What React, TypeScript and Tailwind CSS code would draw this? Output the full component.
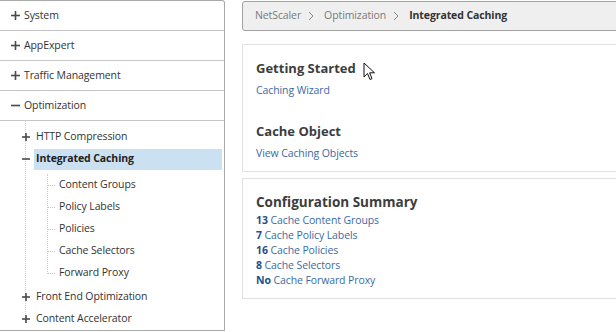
import React from "react";

const font = { fontFamily: '"Open Sans", "Noto Sans", sans-serif' };

function Plus({ minus = false, big = false }: { minus?: boolean; big?: boolean }) {
  const s = big ? 9 : 8;
  return (
    <svg width={s} height={s} viewBox={`0 0 ${s} ${s}`} className="shrink-0">
      <rect x="0" y={(s - 1.6) / 2} width={s} height="1.6" fill="#4a4a4a" />
      {!minus && <rect x={(s - 1.6) / 2} y="0" width="1.6" height={s} fill="#4a4a4a" />}
    </svg>
  );
}

function Chevron() {
  return (
    <svg width="6" height="10" viewBox="0 0 6 10" className="shrink-0 ml-[7px] mr-[10px]">
      <path d="M1 1 L5 5 L1 9" fill="none" stroke="#8a8a8a" strokeWidth="1" />
    </svg>
  );
}

function TopRow({ label, open = false }: { label: string; open?: boolean }) {
  return (
    <div className="h-[30px] border-b border-[#c6c6c6] flex items-center pl-[11px] gap-[4px] text-[10.5px] tracking-[-0.1px] text-[#333]">
      <Plus minus={open} big />
      <span>{label}</span>
    </div>
  );
}

function Child({ label }: { label: string }) {
  return (
    <div className="h-[22px] flex items-center">
      <span className="w-[7px] border-t border-dotted border-[#c4c4c4]" />
      <span className="ml-[4px]">{label}</span>
    </div>
  );
}

function Cursor() {
  return (
    <svg width="14" height="20" viewBox="0 0 14 20" className="absolute left-[363px] top-[62px]">
      <path d="M1 1 L1 15 L4.5 11.5 L7 17.5 L9 16.6 L6.6 10.8 L11.5 10.8 Z" fill="#fff" stroke="#111" strokeWidth="1" strokeLinejoin="round" />
    </svg>
  );
}

export default function App() {
  const summary: [string, string][] = [
    ["13", "Cache Content Groups"],
    ["7", "Cache Policy Labels"],
    ["16", "Cache Policies"],
    ["8", "Cache Selectors"],
    ["No", "Cache Forward Proxy"],
  ];

  return (
    <div className="relative w-[616px] h-[332px] bg-white overflow-hidden flex" style={font}>
      {/* sidebar */}
      <div className="w-[225px] h-[331px] shrink-0 border-t border-r border-b border-[#a9a9a9] rounded-tr-[3px] bg-white">
        <TopRow label="System" />
        <TopRow label="AppExpert" />
        <TopRow label="Traffic Management" />
        <TopRow label="Optimization" open />
        <div className="ml-[25px] mt-[-1px] pt-[6px] border-l border-dotted border-[#cccccc] text-[10.5px] tracking-[-0.1px] text-[#333] h-[198px]">
          <div className="h-[22px] flex items-center -ml-[4px] gap-[6px]">
            <Plus />
            <span>HTTP Compression</span>
          </div>
          <div className="h-[22px] flex items-center -ml-[4px] gap-[4px]">
            <Plus minus />
            <span className="flex-1 h-[21px] flex items-center pl-[2px] mr-[2px] bg-[#cbe0f1] font-bold text-[#222]">
              Integrated Caching
            </span>
          </div>
          <div className="ml-[21px] mt-[4px] border-l border-dotted border-[#cccccc] h-[100px]">
            <Child label="Content Groups" />
            <Child label="Policy Labels" />
            <Child label="Policies" />
            <Child label="Cache Selectors" />
            <Child label="Forward Proxy" />
          </div>
          <div className="mt-[12px] h-[22px] flex items-center -ml-[4px] gap-[6px]">
            <Plus />
            <span>Front End Optimization</span>
          </div>
          <div className="h-[22px] flex items-center -ml-[4px] gap-[6px]">
            <Plus />
            <span>Content Accelerator</span>
          </div>
        </div>
      </div>

      {/* main */}
      <div className="flex-1 pl-[17px] pt-[1px]">
        <div className="h-[30px] -mr-[4px] border border-[#a3a3a3] rounded-[3px] bg-[#efefef] flex items-center pl-[12px] text-[10.5px] tracking-[-0.1px] text-[#7a7a7a]">
          <span>NetScaler</span>
          <Chevron />
          <span>Optimization</span>
          <Chevron />
          <span className="font-bold text-[#333]">Integrated Caching</span>
        </div>

        <div className="mt-[13px] -mr-[4px] h-[128px] border border-[#e2e2e2] pl-[13px] pt-[14px]">
          <div className="text-[13px] font-bold text-[#3d3d3d] leading-[18px]">Getting Started</div>
          <div className="mt-[6px] text-[10.5px] tracking-[-0.1px] text-[#3b6aa3] leading-[15px]">Caching Wizard</div>
          <div className="mt-[24px] text-[13px] font-bold text-[#3d3d3d] leading-[18px]">Cache Object</div>
          <div className="mt-[6px] text-[10.5px] tracking-[-0.1px] text-[#3b6aa3] leading-[15px]">View Caching Objects</div>
        </div>

        <div className="mt-[6px] -mr-[4px] h-[121px] border border-[#e2e2e2] pl-[13px] pt-[14px]">
          <div className="text-[13.5px] font-bold text-[#3d3d3d] leading-[18px]">Configuration Summary</div>
          <div className="mt-[2px] text-[10.5px] tracking-[-0.1px] leading-[15px]">
            {summary.map(([n, t]) => (
              <div key={t} className="text-[#3b6aa3]">
                <span className="font-bold text-[#1d4f8c]">{n}</span> {t}
              </div>
            ))}
          </div>
        </div>
      </div>

      <Cursor />
    </div>
  );
}
